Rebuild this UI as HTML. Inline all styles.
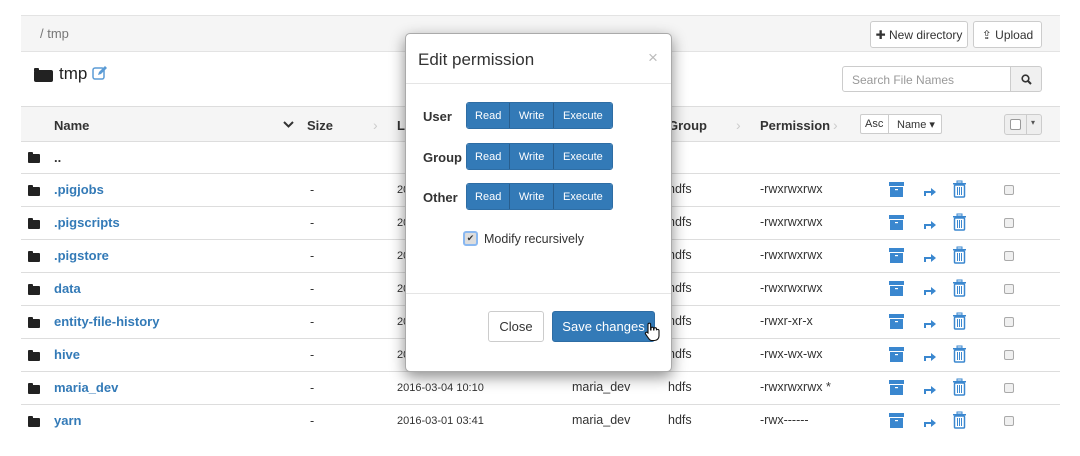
<!DOCTYPE html>
<html><head><meta charset="utf-8"><style>
*{box-sizing:border-box;margin:0;padding:0}
body{width:1080px;height:456px;background:#fff;font-family:"Liberation Sans",Arial,sans-serif;font-size:13px;color:#333;position:relative;overflow:hidden}
.abs{position:absolute}
.bc{left:21px;top:15px;width:1039px;height:37px;background:#f5f5f5;border-top:1px solid #e3e3e3;border-bottom:1px solid #e3e3e3}
.btn{position:absolute;background:#fff;border:1px solid #ccc;border-radius:3px;font-size:12px;color:#333;display:flex;align-items:center;justify-content:center}
.thead{left:21px;top:106px;width:1039px;height:36px;background:#f5f5f5;border-top:1px solid #ddd;border-bottom:1px solid #ddd}
.th{position:absolute;top:118px;font-weight:bold;font-size:13px}
.row{position:absolute;left:21px;width:1039px;height:33px;border-bottom:1px solid #ddd}
.fold{position:absolute;left:28px;width:12px;height:9px;background:#222;border-radius:1px}
.fold:before{content:"";position:absolute;left:0;top:-2px;width:5px;height:3px;background:#222;border-radius:1px 1px 0 0}
.nm{position:absolute;left:54px;color:#337ab7;font-weight:bold}
.c{position:absolute;font-size:12.5px}
.sm{font-size:11px}
.cb{position:absolute;left:1004px;width:10px;height:10px;border:1px solid #aaa;border-radius:2px;background:#f0f0f0}
.modal{left:405px;top:33px;width:267px;height:339px;background:#fff;border:1px solid #aaa;border-radius:5px;box-shadow:0 5px 15px rgba(0,0,0,.45)}
.grp{position:absolute;left:466px;height:27px;width:147px;display:flex;border-radius:3px;overflow:hidden;border:1px solid #2e6da4}
.grp div{background:#337ab7;color:#fff;font-size:11px;display:flex;align-items:center;justify-content:center;border-right:1px solid #285e8e}
.lbl{position:absolute;left:423px;font-weight:bold;font-size:13px}
.chev{position:absolute;color:#ccc;font-size:14px}
</style></head><body>
<div class="abs bc"></div>
<div class="abs" style="left:40px;top:26px;color:#777">/ tmp</div>
<div class="btn" style="left:870px;top:21px;width:98px;height:27px">✚ New directory</div>
<div class="btn" style="left:973px;top:21px;width:69px;height:27px">⇪ Upload</div>
<div class="fold" style="left:34px;top:70px;width:19px;height:12px;border-radius:2px"></div>
<div class="abs" style="left:59px;top:64px;font-size:17px;color:#222">tmp</div>
<svg class="abs" style="left:92px;top:66px" width="16" height="14" viewBox="0 0 16 14"><rect x="1" y="2" width="11" height="11" rx="2" fill="none" stroke="#5b9bd5" stroke-width="1.5"/><path d="M6 9l1-3 6-6 2 2-6 6z" fill="#5b9bd5"/></svg>
<div class="abs" style="left:842px;top:66px;width:169px;height:26px;border:1px solid #ccc;border-radius:3px 0 0 3px;font-size:12px;color:#999;padding:6px 9px">Search File Names</div>
<div class="abs" style="left:1010px;top:66px;width:32px;height:26px;border:1px solid #ccc;background:#f0f0f0;border-radius:0 3px 3px 0"><svg style="position:absolute;left:10px;top:7px" width="11" height="11"><circle cx="4.5" cy="4.5" r="3.3" fill="none" stroke="#333" stroke-width="1.6"/><path d="M7 7l3 3" stroke="#333" stroke-width="2"/></svg></div>
<div class="abs thead"></div>
<div class="th" style="left:54px">Name</div>
<svg class="abs" style="left:283px;top:121px" width="11" height="8"><path d="M1 1l4.5 4.5L10 1" fill="none" stroke="#333" stroke-width="2"/></svg>
<div class="th" style="left:307px">Size</div>
<div class="chev" style="left:373px;top:117px">›</div>
<div class="th" style="left:397px">L</div>
<div class="th" style="left:668px">Group</div>
<div class="chev" style="left:736px;top:117px">›</div>
<div class="th" style="left:760px">Permission</div>
<div class="chev" style="left:833px;top:117px">›</div>
<div class="abs" style="left:860px;top:114px;width:82px;height:20px;border:1px solid #ccc;border-radius:2px;font-size:11px;background:#fff"><span style="position:absolute;left:4px;top:3px">Asc</span><span style="position:absolute;left:27px;top:0;height:18px;border-left:1px solid #ccc"></span><span style="position:absolute;left:36px;top:3px">Name ▾</span></div>
<div class="abs" style="left:1004px;top:114px;width:38px;height:21px;border:1px solid #ccc;border-radius:3px;background:#eee"><span style="position:absolute;left:5px;top:4px;width:11px;height:11px;border:1px solid #999;border-radius:2px;background:#fff"></span><span style="position:absolute;left:21px;top:0;height:19px;border-left:1px solid #ccc"></span><span style="position:absolute;left:26px;top:3px;font-size:8px;color:#555">▾</span></div>

<div class="row" style="top:141px"></div>
<div class="fold" style="top:154px"></div><div class="nm" style="top:150px;color:#333">..</div>

<div class="row" style="top:174px"></div><div class="row" style="top:207px"></div><div class="row" style="top:240px"></div><div class="row" style="top:273px"></div><div class="row" style="top:306px"></div><div class="row" style="top:339px"></div><div class="row" style="top:372px"></div>

<div class="fold" style="top:187px"></div><div class="nm" style="top:182px">.pigjobs</div>
<div class="fold" style="top:220px"></div><div class="nm" style="top:215px">.pigscripts</div>
<div class="fold" style="top:253px"></div><div class="nm" style="top:248px">.pigstore</div>
<div class="fold" style="top:286px"></div><div class="nm" style="top:281px">data</div>
<div class="fold" style="top:319px"></div><div class="nm" style="top:314px">entity-file-history</div>
<div class="fold" style="top:352px"></div><div class="nm" style="top:347px">hive</div>
<div class="fold" style="top:385px"></div><div class="nm" style="top:380px">maria_dev</div>
<div class="fold" style="top:418px"></div><div class="nm" style="top:413px">yarn</div>

<div class="c" style="left:310px;top:183px">-</div><div class="c" style="left:310px;top:216px">-</div><div class="c" style="left:310px;top:249px">-</div><div class="c" style="left:310px;top:282px">-</div><div class="c" style="left:310px;top:315px">-</div><div class="c" style="left:310px;top:348px">-</div><div class="c" style="left:310px;top:381px">-</div><div class="c" style="left:310px;top:414px">-</div>

<div class="c sm" style="left:397px;top:184px">2016-03-04 10:10</div><div class="c sm" style="left:397px;top:217px">2016-03-04 10:10</div><div class="c sm" style="left:397px;top:250px">2016-03-04 10:10</div><div class="c sm" style="left:397px;top:283px">2016-03-04 10:10</div><div class="c sm" style="left:397px;top:316px">2016-03-04 10:10</div><div class="c sm" style="left:397px;top:349px">2016-03-01 03:41</div>
<div class="c" style="left:572px;top:348px">ambari-qa</div>
<div class="c sm" style="left:397px;top:382px">2016-03-04 10:10</div><div class="c sm" style="left:397px;top:415px">2016-03-01 03:41</div>
<div class="c" style="left:572px;top:380px">maria_dev</div><div class="c" style="left:572px;top:413px">maria_dev</div>
<div class="c" style="left:668px;top:182px">hdfs</div><div class="c" style="left:668px;top:215px">hdfs</div><div class="c" style="left:668px;top:248px">hdfs</div><div class="c" style="left:668px;top:281px">hdfs</div><div class="c" style="left:668px;top:314px">hdfs</div><div class="c" style="left:668px;top:347px">hdfs</div><div class="c" style="left:668px;top:380px">hdfs</div><div class="c" style="left:668px;top:413px">hdfs</div>
<div class="c" style="left:760px;top:182px">-rwxrwxrwx</div><div class="c" style="left:760px;top:215px">-rwxrwxrwx</div><div class="c" style="left:760px;top:248px">-rwxrwxrwx</div><div class="c" style="left:760px;top:281px">-rwxrwxrwx</div><div class="c" style="left:760px;top:314px">-rwxr-xr-x</div><div class="c" style="left:760px;top:347px">-rwx-wx-wx</div><div class="c" style="left:760px;top:380px">-rwxrwxrwx *</div><div class="c" style="left:760px;top:413px">-rwx------</div>

<svg class="abs" style="left:0;top:0" width="1080" height="456">
<defs><g id="ic">
<rect x="889" y="-8" width="15" height="4" fill="#3a87cf"/><rect x="890" y="-3" width="13" height="10" fill="#3a87cf"/><rect x="895" y="-1" width="3" height="1.2" fill="#fff"/>
<path d="M924 6v-5h7v-3l5 4-5 4v-3h-5v3z" fill="#3a87cf"/>
<rect x="953" y="-7" width="13" height="1.5" fill="#3a87cf"/><rect x="957" y="-9" width="5" height="2" fill="none" stroke="#3a87cf"/><rect x="954.5" y="-5" width="10" height="12" rx="1" fill="none" stroke="#3a87cf" stroke-width="1.5"/><path d="M957.5-3v8M959.5-3v8M961.5-3v8" stroke="#3a87cf"/>
</g></defs>
<use href="#ic" y="190"/><use href="#ic" y="223"/><use href="#ic" y="256"/><use href="#ic" y="289"/><use href="#ic" y="322"/><use href="#ic" y="355"/><use href="#ic" y="388"/><use href="#ic" y="421"/>
</svg>
<div class="cb" style="top:185px"></div><div class="cb" style="top:218px"></div><div class="cb" style="top:251px"></div><div class="cb" style="top:284px"></div><div class="cb" style="top:317px"></div><div class="cb" style="top:350px"></div><div class="cb" style="top:383px"></div><div class="cb" style="top:416px"></div>

<div class="abs modal"></div>
<div class="abs" style="left:418px;top:50px;font-size:17px;color:#333">Edit permission</div>
<div class="abs" style="left:648px;top:48px;font-size:17px;color:#bbb">×</div>
<div class="abs" style="left:406px;top:83px;width:265px;border-top:1px solid #e5e5e5"></div>
<div class="lbl" style="top:109px">User</div>
<div class="lbl" style="top:150px">Group</div>
<div class="lbl" style="top:190px">Other</div>
<div class="grp" style="top:102px"><div style="width:44px">Read</div><div style="width:44px">Write</div><div style="width:59px;border:0">Execute</div></div>
<div class="grp" style="top:143px"><div style="width:44px">Read</div><div style="width:44px">Write</div><div style="width:59px;border:0">Execute</div></div>
<div class="grp" style="top:183px"><div style="width:44px">Read</div><div style="width:44px">Write</div><div style="width:59px;border:0">Execute</div></div>
<div class="abs" style="left:463px;top:231px;width:15px;height:15px;border:2px solid #8ab8f0;border-radius:3px;background:#ddd;font-size:9px;text-align:center;line-height:11px">✔</div>
<div class="abs" style="left:484px;top:232px;font-size:12.5px">Modify recursively</div>
<div class="abs" style="left:406px;top:293px;width:265px;border-top:1px solid #e5e5e5"></div>
<div class="btn" style="left:488px;top:311px;width:56px;height:31px;font-size:13px">Close</div>
<div class="btn" style="left:552px;top:311px;width:103px;height:31px;font-size:13px;background:#337ab7;border-color:#2e6da4;color:#fff">Save changes</div>
<svg class="abs" style="left:644px;top:322px" width="16" height="20" viewBox="0 0 16 20"><path d="M4 11V2.5a1.3 1.3 0 0 1 2.6 0V8h.4V6.5a1.3 1.3 0 0 1 2.6 0V8h.3V7a1.3 1.3 0 0 1 2.6 0v1.2a1.3 1.3 0 0 1 2.5.3V14c0 2.5-2 4.5-4.5 4.5H7.5C5.8 18.5 5 17 4 15.5L1.5 12a1.2 1.2 0 0 1 2-1.3z" fill="#fff" stroke="#111" stroke-width="1.1"/></svg>
</body></html>
